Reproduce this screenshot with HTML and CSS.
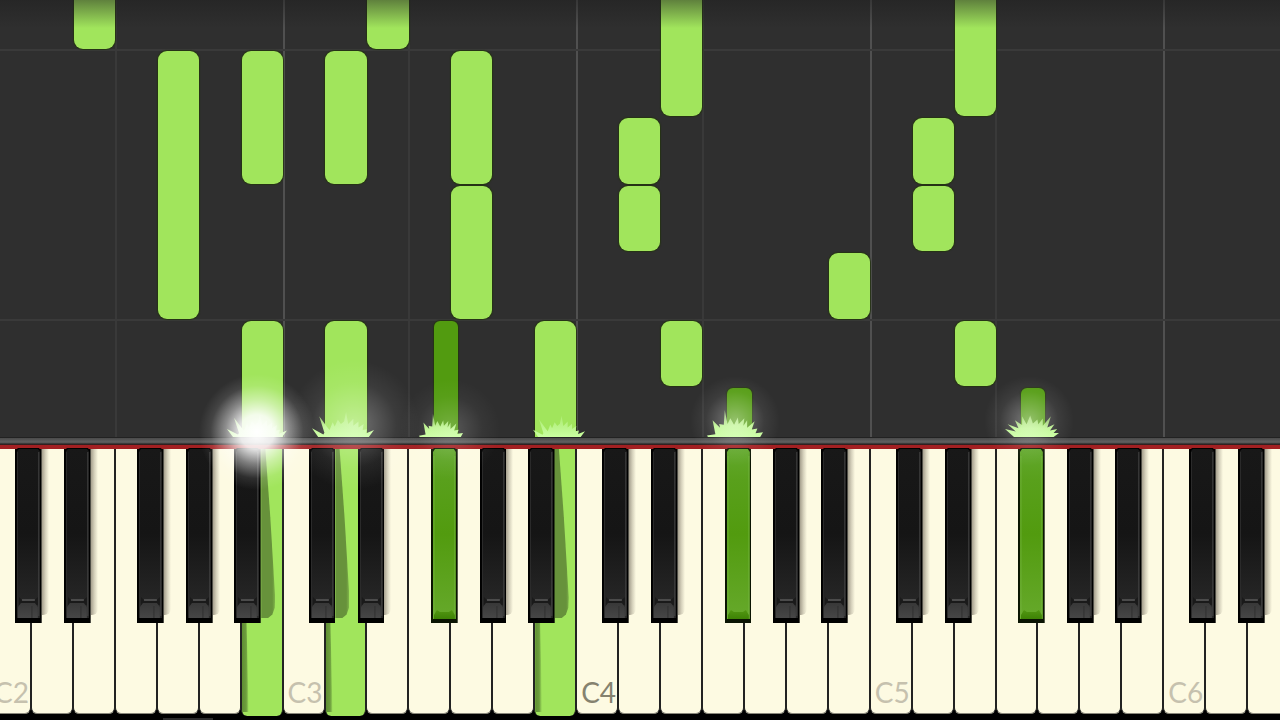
FILE: index.html
```
<!DOCTYPE html>
<html lang="en">
    <head>
        <meta charset="utf-8">
        <title>Piano</title>
        <link rel="stylesheet" href="styles.css">
    </head>
    <body>
        <svg class="defs" aria-hidden="true">
            <defs>
                <linearGradient id="ebony" x1="0" y1="0" x2="0" y2="1">
                    <stop offset="0" stop-color="#181818" />
                    <stop offset="0.5" stop-color="#151515" />
                    <stop offset="1" stop-color="#2a2a2a" />
                </linearGradient>
                <linearGradient id="cap" x1="0" y1="0" x2="0" y2="1">
                    <stop offset="0" stop-color="#383838" />
                    <stop offset="1" stop-color="#464646" />
                </linearGradient>
                <linearGradient id="lit" x1="0" y1="0" x2="0" y2="1">
                    <stop offset="0" stop-color="#62a82c" />
                    <stop offset="0.18" stop-color="#59a01c" />
                    <stop offset="0.5" stop-color="#529b0f" />
                    <stop offset="1" stop-color="#66a92b" />
                </linearGradient>
                <linearGradient id="lit-foot" x1="0" y1="0" x2="0" y2="1">
                    <stop offset="0" stop-color="#529712" />
                    <stop offset="1" stop-color="#3d8205" />
                </linearGradient>
                <linearGradient id="spark" x1="0" y1="0" x2="0" y2="1">
                    <stop offset="0" stop-color="#b8f283" stop-opacity="0.6" />
                    <stop offset="0.6" stop-color="#bdf68e" />
                    <stop offset="1" stop-color="#c9ffa0" />
                </linearGradient>
            </defs>
            <symbol id="key-black" viewBox="0 0 27 175" preserveAspectRatio="none">
                <path d="M0 1H2L3 0H24L25 1H27V175H0Z" fill="#000" />
                <path d="M2 3L4 1H23L25 3V170H2Z" fill="url(#ebony)" />
                <path d="M2.5 4V168" stroke="#2c2c2c" />
                <path d="M24 4V168" stroke="#454545" />
                <path d="M4 149L8 153H19L23 149V157H4Z" fill="#1a1a1a" />
                <path d="M7 152H20" stroke="#585858" stroke-width="1.5" />
                <path d="M3 170V159L6 155H20L23 159V170Z" fill="url(#cap)" />
                <path d="M17 158V170" stroke="#303030" />
            </symbol>
            <symbol id="key-lit" viewBox="0 0 27 175" preserveAspectRatio="none">
                <path d="M0 1H2L3 0H24L25 1H27V175H0Z" fill="#0a1402" />
                <path d="M2 4L4 1H23L25 4V171H2Z" fill="url(#lit)" />
                <path d="M3 8V170M24 8V170" stroke="#78b848" stroke-opacity="0.6" />
                <path d="M3 171V167L6 162L9 164H18L21 162L24 167V171Z" fill="url(#lit-foot)" />
            </symbol>
            <symbol id="splash-a" viewBox="0 0 60 30" preserveAspectRatio="none">
                <path d="M6 30L0 20L11 27L12 25L7 6L15 19L17 22L20 13L22 18L25 10L28 15L31 12L33 1L35 15L40 9L40 17L45 12L45 19L50 15L49 22L53 21L52 26L60 22L55 30Z" fill="url(#spark)" />
            </symbol>
            <symbol id="splash-b" viewBox="0 0 60 30" preserveAspectRatio="none">
                <path d="M1 30L0 28.500L9 27L6 12L14 20L13 16L18 17L19 1L22 16L25 10L29 17L33 9L34 16L40 10L39 18L43 12L43 20L51 13L48 22L54 21L52 26L60 25L57 30Z" fill="url(#spark)" />
            </symbol>
            <symbol id="splash-c" viewBox="0 0 60 30" preserveAspectRatio="none">
                <path d="M10 30L0 20L12 23L3 14L15 19L11 9L19 15L19 4L24 14L28 3L31 13L36 8L37 14L42 7L42 16L51 4L47 18L55 14L50 22L58 20L54 25L60 25L54 30Z" fill="url(#spark)" />
            </symbol>
        </svg>

        <main class="piano">
            <div class="roll">
                <div class="lanes" id="lanes"></div>
                <div class="notes" id="notes"></div>
                <div class="effects" id="effects"></div>
            </div>
            <div class="rail"></div>
            <div class="keyboard" id="keyboard"></div>
            <div class="base"><span class="seek"></span></div>
        </main>
        <script src="piano.js"></script>
    </body>
</html>
```

FILE: styles.css
```
body {
    margin: 0;
    background: #000;
    overflow: hidden;
    font-family: Lato, "Open Sans", sans-serif;
}

.defs {
    position: absolute;
    width: 0;
    height: 0;
}

/* the first and last keys run off the edges of the window */
.piano {
    display: flex;
    flex-direction: column;
    height: 100vh;
    margin: 0 -9px 0 -11px;
}

/* falling notes */
.roll {
    position: relative;
    flex: 1;
    background: #2f2f2f;
}

.lanes,
.notes,
.effects {
    position: absolute;
    inset: 0;
}

.lanes,
.notes {
    overflow: hidden;
}

.notes::after {
    content: "";
    position: absolute;
    inset: 0 0 auto;
    height: 28px;
    background: linear-gradient(rgba(30, 30, 30, 0.5), rgba(30, 30, 30, 0));
}

.lane {
    position: absolute;
    top: 0;
    bottom: 0;
    width: 2px;
    background: #393939;
}

.lane.octave {
    background: #505050;
}

.bar {
    position: absolute;
    left: 0;
    right: 0;
    height: 2px;
    background: #3a3a3a;
}

.note {
    position: absolute;
    box-sizing: border-box;
    margin-left: 1px;
    border-radius: 9px;
    background: #a1e55c;
    box-shadow: 0 0 1px 1px #263415;
}

.note.sharp {
    border-radius: 6px;
    background: #529b10;
}

.effects {
    z-index: 5;
    pointer-events: none;
}

.glow {
    position: absolute;
    transform: translate(-50%, 50%);
    border-radius: 50%;
    background: radial-gradient(closest-side, rgba(255, 255, 255, 0.7), rgba(255, 255, 255, 0.42) 30%, rgba(255, 255, 255, 0.12) 65%, rgba(255, 255, 255, 0));
}

.glow.bright {
    background: radial-gradient(closest-side, #fff, rgba(255, 255, 255, 0.88) 30%, rgba(255, 255, 255, 0.45) 55%, rgba(255, 255, 255, 0.1) 80%, rgba(255, 255, 255, 0));
}

.splash {
    position: absolute;
    bottom: 0;
    transform: translateX(-50%);
}

.rail {
    height: 7px;
    border-top: 1px solid #222;
    border-bottom: 4px solid #a32022;
    background: linear-gradient(#4a4a4a, #616161 60%, #2c2c2c 85%, #3c1414);
}

/* keys */
.keyboard {
    display: flex;
    height: 265px;
    background: #000;
}

.slot {
    position: relative;
    flex: 1;
}

.white,
.black {
    display: block;
    padding: 0;
    border: 0;
    font: inherit;
}

.white {
    position: relative;
    width: 100%;
    height: 100%;
    border-left: 1px solid #222;
    border-right: 1px solid #222;
    border-bottom: 1px solid #88867a;
    border-radius: 0 0 6px 6px;
    background: #fdfae2;
}

.white.pressed {
    height: 267px;
    border-bottom: 0;
    background: #a1e55c;
}

.white.pressed::before {
    content: "";
    position: absolute;
    left: 0;
    bottom: 4px;
    width: 7px;
    height: 90px;
    background: linear-gradient(to right, #5f8f32, #6d9d3e 60%, rgba(110, 158, 62, 0));
    clip-path: polygon(0 0, 70% 0, 100% 100%, 0 100%);
}

.name {
    position: absolute;
    left: 4px;
    bottom: 3px;
    font-size: 28px;
    line-height: 36px;
    color: #c6c1ae;
}

.name.middle {
    color: #85826f;
}

.black {
    position: absolute;
    z-index: 2;
    top: -1px;
    width: 64%;
    height: 175px;
    background: none;
}

.black svg {
    display: block;
    width: 100%;
    height: 100%;
}

.black::after {
    content: "";
    position: absolute;
    left: 100%;
    top: 1px;
    width: 7px;
    height: 166px;
    border-radius: 0 0 6px 0;
    background: linear-gradient(to right, rgba(60, 50, 40, 0.45), rgba(60, 50, 40, 0.2) 50%, rgba(60, 50, 40, 0));
}

.black.deep::after {
    width: 14px;
    height: 169px;
    background: linear-gradient(to right, #67923b 80%, rgba(103, 146, 59, 0.6));
    clip-path: polygon(0 0, 30% 0, 65% 40%, 100% 88%, 97% 94%, 80% 98%, 50% 100%, 0 100%);
}

.black.pressed::after {
    display: none;
}

.base {
    height: 6px;
    background: #000;
    display: flex;
    align-items: flex-end;
}

.seek {
    width: 50px;
    height: 2px;
    margin-left: 174px;
    background: #2c2c2c;
}
```

FILE: piano.js
```
const KEYS = 31          // white keys, starting on C2
const STEP = 67.5        // height of one eighth note
const OFFSET = 51        // first step above the hit line

// left edge of the black key inside its white key, in %
const SHARPS = { 0: 62, 1: 79, 3: 54, 4: 70, 5: 85 }

const pressedWhite = [6, 8, 13]
const pressedBlack = [10, 17, 24]

// [white key, start, length, sharp]
const notes = [
    [2, 5, 1], [9, 5, 1],
    [4, 1, 4],
    [6, 3, 2], [6, -1, 2],
    [8, 3, 2], [8, -1, 2],
    [11, 3, 2], [11, 1, 2],
    [13, -1, 2],
    [15, 3, 1], [15, 2, 1],
    [16, 4, 2], [16, 0, 1],
    [20, 1, 1],
    [22, 3, 1], [22, 2, 1],
    [23, 4, 2], [23, 0, 1],
    [10, -1, 2, true], [17, -1, 1, true], [24, -1, 1, true]
]

// x is counted in white keys
const glows = [
    { x: 6.38, y: 5, size: 116, opacity: 1, bright: true },
    { x: 8.7, y: 12, size: 130, opacity: 0.5 },
    { x: 11, y: 8, size: 100, opacity: 0.3 },
    { x: 17.8, y: 16, size: 90, opacity: 0.55 },
    { x: 24.8, y: 16, size: 90, opacity: 0.55 }
]

const splashes = [
    { x: 6.38, width: 60, height: 24, shape: 'a' },
    { x: 8.45, width: 62, height: 26, shape: 'a' },
    { x: 10.78, width: 44, height: 24, shape: 'b' },
    { x: 13.6, width: 52, height: 22, shape: 'a' },
    { x: 17.78, width: 56, height: 28, shape: 'b' },
    { x: 24.87, width: 54, height: 24, shape: 'c' }
]

const percent = x => (x / KEYS * 100) + '%'

const add = function(parent, className){
    const el = document.createElement('div')
    el.className = className
    parent.appendChild(el)
    return el
}

const lanes = document.getElementById('lanes')
for(let i = 0; i < KEYS; i++){
    if(i % 7 === 0 || i % 7 === 3){
        add(lanes, i % 7 === 0 ? 'lane octave' : 'lane').style.left = percent(i)
    }
}
for(let t = 1; t < 9; t += 4){
    add(lanes, 'bar').style.bottom = (OFFSET + t * STEP - 2) + 'px'
}

const roll = document.getElementById('notes')
for(let [key, start, length, sharp] of notes){
    const el = add(roll, sharp ? 'note sharp' : 'note')
    el.style.left = percent(sharp ? key + 0.58 : key)
    el.style.width = percent(sharp ? 0.58 : 0.98)
    el.style.bottom = (OFFSET + start * STEP) + 'px'
    el.style.height = (length * STEP - 2) + 'px'
}

const effects = document.getElementById('effects')
for(let s of splashes){
    effects.insertAdjacentHTML('beforeend',
        `<svg class="splash" style="left:${percent(s.x)}" width="${s.width}" height="${s.height}"><use href="#splash-${s.shape}" /></svg>`)
}
for(let g of glows){
    const el = add(effects, g.bright ? 'glow bright' : 'glow')
    el.style.left = percent(g.x)
    el.style.bottom = g.y + 'px'
    el.style.width = el.style.height = g.size + 'px'
    el.style.opacity = g.opacity
}

const keyboard = document.getElementById('keyboard')
for(let i = 0; i < KEYS; i++){
    const octave = Math.floor(i / 7) + 2
    const step = i % 7
    const name = 'CDEFGAB'[step] + octave
    let label = ''
    if(step === 0){
        label = `<span class="name${octave === 4 ? ' middle' : ''}">${name}</span>`
    }
    let html = `<button class="white${pressedWhite.includes(i) ? ' pressed' : ''}" aria-label="${name}">${label}</button>`
    if(step in SHARPS){
        const lit = pressedBlack.includes(i)
        const state = lit ? ' pressed' : pressedWhite.includes(i + 1) ? ' deep' : ''
        html += `<button class="black${state}" style="left:${SHARPS[step]}%" aria-label="${name} sharp">
            <svg><use href="#key-${lit ? 'lit' : 'black'}" /></svg></button>`
    }
    add(keyboard, 'slot').innerHTML = html
}
```
